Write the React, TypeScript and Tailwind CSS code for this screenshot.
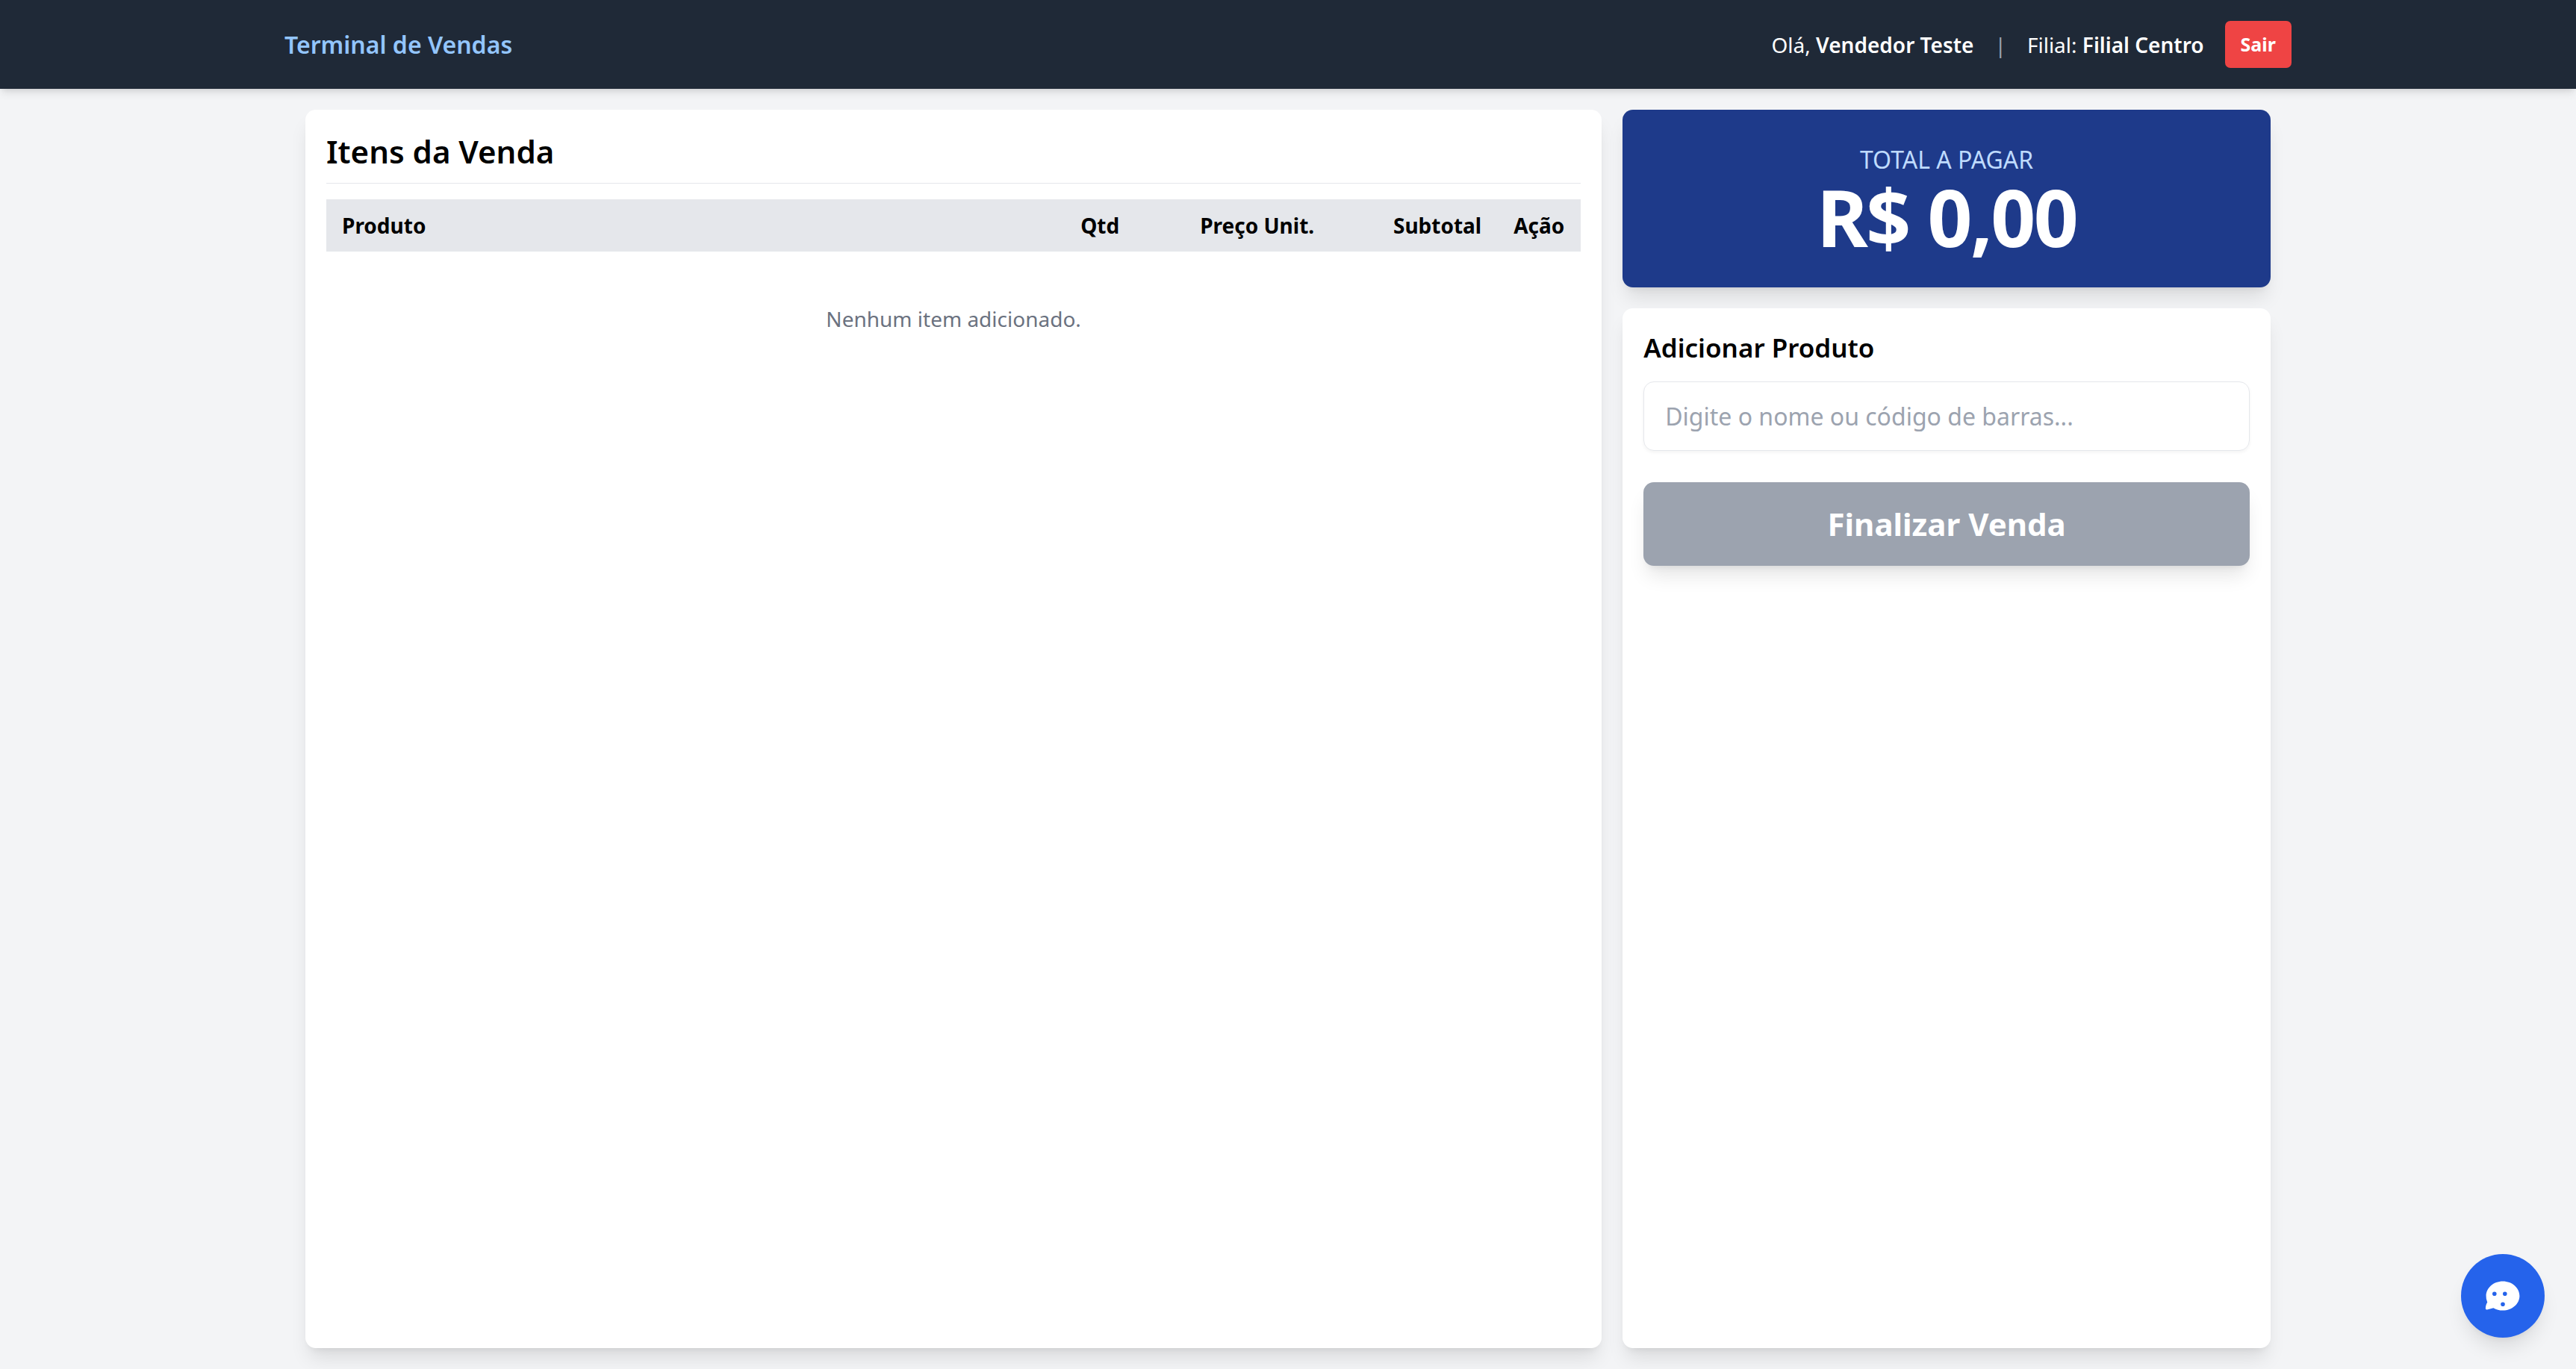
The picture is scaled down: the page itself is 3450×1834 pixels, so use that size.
import React from "react";

function Header() {
  return (
    <header className="relative bg-[#1f2937] p-4 text-white shadow-[0_7px_11px_-2px_rgb(0_0_0/0.1),0_4px_7px_-4px_rgb(0_0_0/0.1)]">
      <div className="mx-auto flex max-w-[2688px] items-center justify-between">
        <h1 className="text-[32px] leading-[48px] font-semibold text-[#93c5fd]">Terminal de Vendas</h1>
        <div className="flex items-center gap-4 leading-[40px]">
          <span>
            Olá, <strong className="font-semibold">Vendedor Teste</strong>
          </span>
          <span className="text-[#9ca3af]">|</span>
          <span>
            Filial: <strong className="font-semibold">Filial Centro</strong>
          </span>
          <button
            type="button"
            className="rounded-[7px] bg-[#ef4444] px-3 py-2 text-[25px] leading-[35px] font-bold"
          >
            Sair
          </button>
        </div>
      </div>
    </header>
  );
}

function SaleItems() {
  return (
    <section className="w-2/3 rounded-[14px] bg-white p-4 shadow-[0_18px_26px_-5px_rgb(0_0_0/0.1),0_7px_11px_-7px_rgb(0_0_0/0.1)]">
      <h2 className="mb-3 border-b border-[#e5e7eb] pb-2 text-[42px] leading-[56px] font-semibold">
        Itens da Venda
      </h2>
      <table className="w-full table-fixed">
        <thead className="bg-[#e5e7eb]">
          <tr>
            <th className="px-3 py-2 text-left">Produto</th>
            <th className="w-24 px-3 py-2 text-center">Qtd</th>
            <th className="w-32 px-3 py-2 text-right">Preço Unit.</th>
            <th className="w-32 px-3 py-2 text-right">Subtotal</th>
            <th className="w-16 px-3 py-2 text-center">Ação</th>
          </tr>
        </thead>
        <tbody>
          <tr>
            <td colSpan={5} className="p-10 text-center leading-[40px] text-[#6b7280]">
              Nenhum item adicionado.
            </td>
          </tr>
        </tbody>
      </table>
    </section>
  );
}

function Checkout() {
  return (
    <aside className="flex w-1/3 flex-col gap-4">
      <div className="rounded-[14px] bg-[#1e3a8a] p-6 text-center text-white shadow-[0_18px_26px_-5px_rgb(0_0_0/0.1),0_7px_11px_-7px_rgb(0_0_0/0.1)]">
        <p className="text-[32px] leading-[49px] text-[#bfdbfe]">TOTAL A PAGAR</p>
        <p className="text-[105px] leading-none font-bold tracking-tight">R$ 0,00</p>
      </div>
      <form className="flex-1 rounded-[14px] bg-white p-4 shadow-[0_18px_26px_-5px_rgb(0_0_0/0.1),0_7px_11px_-7px_rgb(0_0_0/0.1)]">
        <label htmlFor="produto" className="mb-3 block text-[35px] leading-[49px] font-semibold">
          Adicionar Produto
        </label>
        <input
          id="produto"
          type="text"
          placeholder="Digite o nome ou código de barras..."
          className="mb-6 block w-full rounded-[14px] border border-[#e5e7eb] px-4 py-3 text-[32px] leading-[49px] shadow-[0_2px_4px_0_rgb(0_0_0/0.05)] placeholder:text-[#9ca3af]"
        />
        <button
          type="button"
          disabled
          className="block w-full rounded-[14px] bg-[#9ca3af] p-4 text-[42px] leading-[56px] font-bold text-white shadow-[0_18px_26px_-5px_rgb(0_0_0/0.1),0_7px_11px_-7px_rgb(0_0_0/0.1)]"
        >
          Finalizar Venda
        </button>
      </form>
    </aside>
  );
}

function ChatButton() {
  return (
    <button
      type="button"
      aria-label="Abrir chat"
      className="fixed right-6 bottom-6 rounded-full bg-[#2563eb] p-4 text-white shadow-[0_18px_26px_-5px_rgb(0_0_0/0.1),0_7px_11px_-7px_rgb(0_0_0/0.1)]"
    >
      <svg className="size-8" viewBox="0 0 20 20" fill="currentColor" aria-hidden="true">
        <path
          fillRule="evenodd"
          d="M18 10c0 3.866-3.582 7-8 7a8.84 8.84 0 0 1-4.500-1.200L2.500 16.600C2 16.700 1.700 16.400 1.750 15.900C1.800 14.700 2.100 13.800 2.600 13.100A6.500 6.500 0 0 1 2 10c0-3.866 3.582-7 8-7s8 3.134 8 7zM6 8a1 1 0 1 0 0 2 1 1 0 0 0 0-2zM11 8a1 1 0 1 0 0 2 1 1 0 0 0 0-2zM10 13a1 1 0 1 0 0 2 1 1 0 0 0 0-2z"
        />
      </svg>
    </button>
  );
}

export default function App() {
  return (
    <div className="flex min-h-screen flex-col bg-[#f3f4f6] font-['Noto_Sans',sans-serif] text-[28px] leading-[42px] text-black [--spacing:7px]">
      <Header />
      <main className="mx-auto flex w-full max-w-[2688px] flex-1 gap-4 p-4">
        <SaleItems />
        <Checkout />
      </main>
      <ChatButton />
    </div>
  );
}
